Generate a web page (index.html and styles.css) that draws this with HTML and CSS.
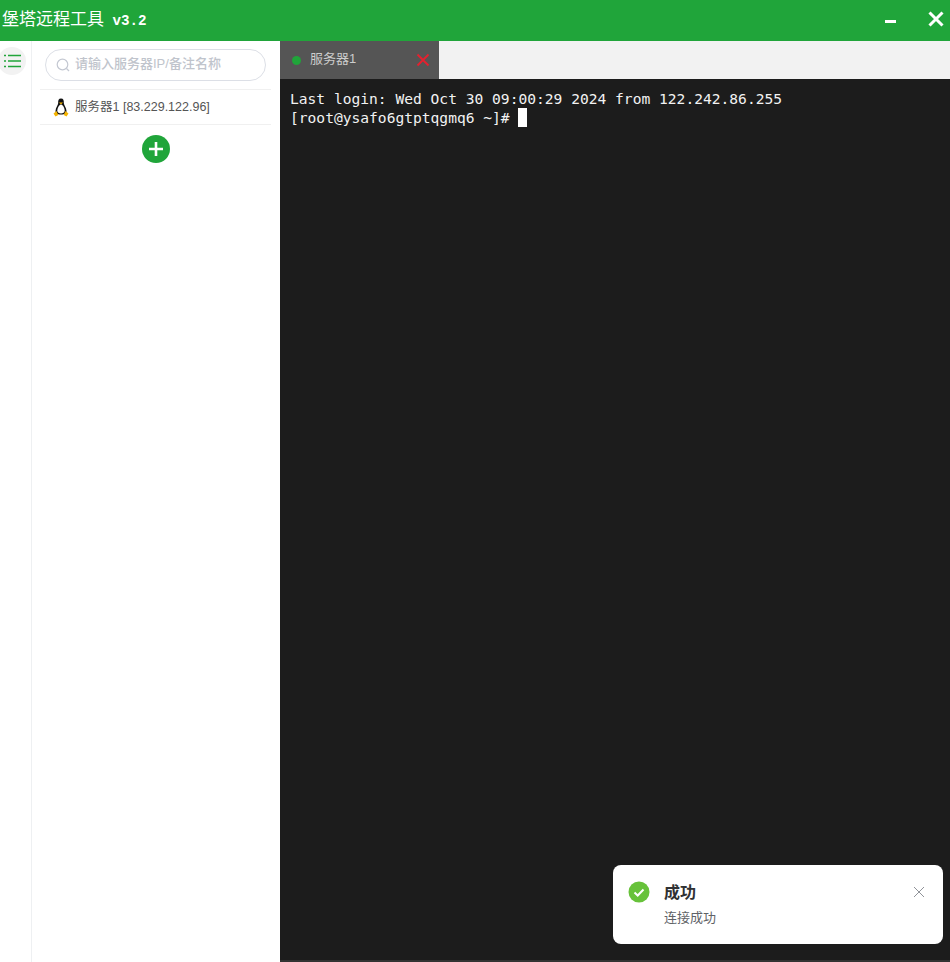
FILE: index.html
```html
<!DOCTYPE html>
<html lang="zh-CN">
<head>
<meta charset="utf-8">
<title>堡塔远程工具</title>
<link rel="stylesheet" href="styles.css">
</head>
<body>
<div class="app">
  <header class="titlebar">
    <div class="title">堡塔远程工具<span class="ver"> v3.2</span></div>
    <div class="winbtns">
      <span class="min"></span>
      <svg class="close" width="16" height="16" viewBox="0 0 16 16"><path d="M1.500 1.500 14.500 14.500M14.500 1.500 1.500 14.500" stroke="#fff" stroke-width="3" fill="none"/></svg>
    </div>
  </header>
  <main class="body">
    <nav class="rail">
      <div class="menu">
        <svg width="17" height="14" viewBox="0 0 17 14"><path d="M4 1.500H17M4 7H17M4 12.500H17" stroke="#20a53a" stroke-width="1.500"/><path d="M0 1.500H2M0 7H2M0 12.500H2" stroke="#20a53a" stroke-width="1.600"/></svg>
      </div>
    </nav>
    <aside class="side">
      <div class="searchwrap">
        <div class="search">
          <svg width="14" height="14" viewBox="0 0 14 14"><circle cx="6.500" cy="6.500" r="5.300" fill="none" stroke="#c4c8d2" stroke-width="1.200"/><path d="M10.500 10.500 13 13" stroke="#c4c8d2" stroke-width="1.200"/></svg>
          <span>请输入服务器IP/备注名称</span>
        </div>
      </div>
      <div class="row">
        <svg class="tux" width="16" height="19" viewBox="0 0 16 19">
          <path d="M8 0.500C5.600 0.500 5 2.500 5.200 5 5.300 7 2.600 9.500 2.500 13 2.500 15 4 16.500 8 16.500S13.500 15 13.500 13C13.400 9.500 10.700 7 10.800 5 11 2.500 10.400 0.500 8 0.500Z" fill="#111"/>
          <path d="M8 6.500C6 7 4.300 10 4.300 12.800 4.300 14.800 6 15.500 8 15.500S11.700 14.800 11.700 12.800C11.700 10 10 7 8 6.500Z" fill="#fff"/>
          <path d="M6 4.500H10L8 6.500Z" fill="#f5b400"/>
          <path d="M0.500 15.500 3.500 13 5.300 17 2.500 18.500ZM15.500 15.500 12.500 13 10.700 17 13.500 18.500Z" fill="#f5b400"/>
        </svg>
        <span class="name">服务器1 [83.229.122.96]</span>
      </div>
      <div class="addwrap">
        <div class="add"><svg width="14" height="14" viewBox="0 0 14 14"><path d="M7 0V14M0 7H14" stroke="#fff" stroke-width="2.600"/></svg></div>
      </div>
    </aside>
    <section class="main">
      <div class="tabs">
        <div class="tab">
          <i class="dot"></i>
          <span class="tabname">服务器1</span>
          <svg width="14" height="14" viewBox="0 0 14 14"><path d="M1.500 1.500 12.500 12.500M12.500 1.500 1.500 12.500" stroke="#e6202e" stroke-width="1.800"/></svg>
        </div>
      </div>
      <div class="term">
        <div class="line">Last login: Wed Oct 30 09:00:29 2024 from 122.242.86.255</div>
        <div class="line">[root@ysafo6gtptqgmq6 ~]# <i class="cursor"></i></div>
      </div>
      <div class="toast">
        <svg class="ok" width="22" height="22" viewBox="0 0 22 22"><circle cx="11" cy="11" r="10.500" fill="#67c23a"/><path d="M6.500 11.500 9.700 14.500 15.500 8.500" stroke="#fff" stroke-width="2" fill="none"/></svg>
        <div class="msg">
          <div class="h">成功</div>
          <div class="p">连接成功</div>
        </div>
        <svg class="x" width="12" height="12" viewBox="0 0 12 12"><path d="M1 1 11 11M11 1 1 11" stroke="#909399" stroke-width="1"/></svg>
      </div>
    </section>
  </main>
</div>
</body>
</html>
```
FILE: styles.css
```css
* { box-sizing: border-box; }
html, body { margin: 0; height: 100%; overflow: hidden; }
body { font-family: "Liberation Sans", "Noto Sans CJK SC", sans-serif; background: #fff; }
.app { display: flex; flex-direction: column; height: 962px; }
.titlebar { height: 41px; background: #20a53a; display: flex; align-items: center; justify-content: space-between; color: #fff; padding: 0 6px 0 2px; flex: none; }
.title { font-family: "Liberation Serif", "Noto Sans CJK SC", serif; font-size: 17px; line-height: 41px; white-space: pre; }
.ver { font-family: "Liberation Mono", monospace; font-weight: bold; font-size: 14.200px; }
.winbtns { display: flex; align-items: center; gap: 32px; padding-bottom: 4px; }
.min { width: 11px; height: 3px; background: #fff; margin-top: 6px; }
.close { display: block; }
.body { flex: 1; display: flex; min-height: 0; }
.rail { width: 32px; border-right: 1px solid #eef0f2; padding-top: 6px; flex: none; }
.menu { width: 28px; height: 28px; border-radius: 50%; background: #f2f2f2; display: flex; align-items: center; justify-content: center; margin-left: -2px; padding-left: 1px; }
.side { width: 248px; flex: none; padding: 0 9px 0 8px; }
.searchwrap { padding: 8px 5px; border-bottom: 1px solid #f0f0f0; height: 49px; }
.search { height: 32px; border: 1px solid #dcdfe6; border-radius: 16px; display: flex; align-items: center; gap: 5px; padding-left: 10px; color: #c0c4cc; font-size: 13px; font-weight: 500; line-height: 26px; }
.search span { padding-bottom: 3px; }
.row { height: 35px; border-bottom: 1px solid #f0f0f0; display: flex; align-items: center; gap: 6px; padding-left: 13px; color: #555; }
.tux { display: block; }
.name { font-size: 12.500px; padding-bottom: 4px; }
.addwrap { display: flex; justify-content: center; padding-top: 10px; }
.add { width: 28px; height: 28px; border-radius: 50%; background: #20a53a; display: flex; align-items: center; justify-content: center; }
.main { flex: 1; position: relative; display: flex; flex-direction: column; min-width: 0; }
.tabs { height: 38px; background: #f2f2f2; display: flex; flex: none; }
.tab { width: 159px; background: #555; display: flex; align-items: center; padding: 0 9px 0 12px; color: #ccc; font-size: 13px; }
.dot { width: 9px; height: 9px; border-radius: 50%; background: #20a53a; margin-right: 9px; }
.tabname { flex: 1; padding-bottom: 6px; }
.term { flex: 1; background: #1c1c1c; border-bottom: 2px solid #333; color: #f2f2f2; font-family: "DejaVu Sans Mono", monospace; font-size: 14.600px; padding: 10px 0 0 10px; }
.line { height: 19px; line-height: 19px; white-space: pre; }
.cursor { display: inline-block; width: 9px; height: 19px; background: #fff; vertical-align: top; }
.toast { position: absolute; left: 333px; top: 824px; width: 330px; height: 79px; background: #fff; border-radius: 8px; display: flex; align-items: flex-start; padding: 16px 18px 0 15px; }
.ok { flex: none; display: block; }
.msg { flex: 1; margin-left: 14px; }
.h { font-size: 16px; font-weight: bold; color: #303133; line-height: 24px; }
.p { font-size: 13px; color: #606266; line-height: 20px; margin-top: 3px; }
.x { flex: none; margin-top: 5px; display: block; }
```
